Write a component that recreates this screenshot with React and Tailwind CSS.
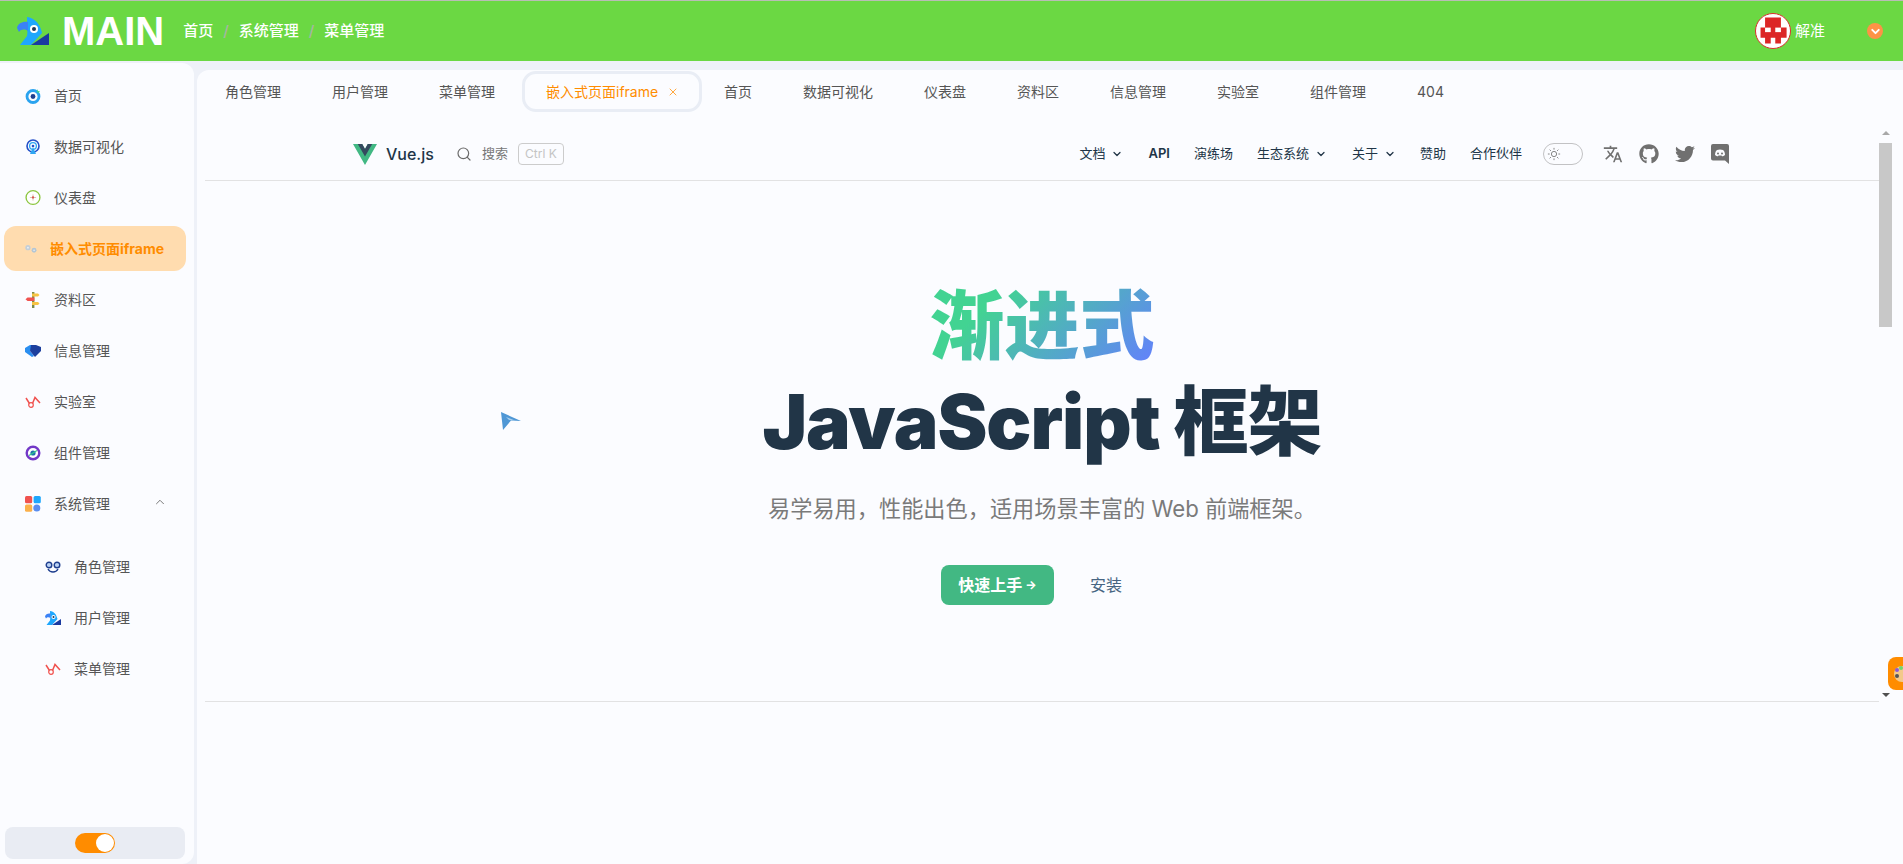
import { ChevronDown, ChevronUp, Search, X } from 'lucide-react';
import { FaGithub, FaTwitter } from 'react-icons/fa';

const uiFont = 'font-[Inter,"Noto_Sans_CJK_SC",sans-serif]';

// Small colourful menu icons
const BirdIcon = ({ className }) => (
  <svg viewBox="0 0 32 28" className={className}>
    <path d="M10 0C18 1 23 7 25 16L14 28H3L10 19C11 15 10 6 10 0Z" fill="#1ea7fd" />
    <path d="M0 11C1 6 6 4 11 5L11 14C8 12 4 12 2 15Z" fill="#3b82f6" />
    <path d="M32 16V28H14Z" fill="#1a3aa0" />
    <circle cx="17" cy="12" r="4" fill="#fff" />
    <circle cx="17" cy="12" r="2" fill="#1f3557" />
  </svg>
);

const TargetIcon = () => (
  <svg viewBox="0 0 16 16" className="w-4 h-4">
    <circle cx="8" cy="8.500" r="6" fill="none" stroke="#2aa3ef" strokeWidth="2.800" />
    <circle cx="8" cy="8.500" r="2.400" fill="#1f3f8f" />
    <path d="M12 1l1 2 2 .5-1.600 1.500-1.500-1z" fill="#3fd58a" />
  </svg>
);

const SignalIcon = () => (
  <svg viewBox="0 0 16 16" className="w-4 h-4">
    <circle cx="8" cy="7" r="6" fill="none" stroke="#2350c8" strokeWidth="1.600" />
    <circle cx="8" cy="7" r="3.400" fill="none" stroke="#2ea6f2" strokeWidth="1.300" />
    <circle cx="8" cy="7" r="1.300" fill="#2350c8" />
    <path d="M8 8l3 7H5z" fill="#2ea6f2" />
  </svg>
);

const CompassIcon = () => (
  <svg viewBox="0 0 18 18" className="w-[17px] h-[17px]">
    <circle cx="9" cy="9" r="7.800" fill="#fff" stroke="#8cc63f" strokeWidth="1.500" />
    <path d="M9 5.500v7M5.500 9h7" stroke="#c9a27a" strokeWidth="0.700" />
    <circle cx="9" cy="9" r="1.300" fill="#d9534f" />
  </svg>
);

const GearsIcon = () => (
  <svg viewBox="0 0 16 16" className="w-[14px] h-[14px]">
    <circle cx="4.500" cy="6.500" r="3" fill="#c3ced8" />
    <circle cx="11.500" cy="9.500" r="2.800" fill="#b4c6d4" />
    <circle cx="4.500" cy="6.500" r="1" fill="#eef2f6" />
    <circle cx="11.500" cy="9.500" r="0.900" fill="#eef2f6" />
  </svg>
);

const SignpostIcon = () => (
  <svg viewBox="0 0 16 16" className="w-4 h-4">
    <rect x="7" y="0" width="2.400" height="16" fill="#7c8b4a" />
    <path d="M7 1.500h6l1.500 1.500L13 4.500H7z" fill="#f6c343" />
    <path d="M9.400 5.500H2.500L0.500 7.200l2 1.800h6.900z" fill="#f0524f" />
    <path d="M7 10h6l1.500 1.500L13 13H7z" fill="#f6c343" />
  </svg>
);

const HandshakeIcon = () => (
  <svg viewBox="0 0 16 12" className="w-4 h-3">
    <path d="M0 3L5 0h4L5 6l4 5-2 1L0 7z" fill="#2a8ef0" />
    <path d="M6 0h5l5 2v4l-6 6-5-6z" fill="#1c3f9e" />
  </svg>
);

const LabIcon = () => (
  <svg viewBox="0 0 16 12" className="w-4 h-3">
    <path d="M1 2L4.500 7.500M7.500 7.500L10 1.500L15 7" fill="none" stroke="#f0524f" strokeWidth="1.500" />
    <circle cx="6" cy="9" r="2.300" fill="#fff" stroke="#f0524f" strokeWidth="1.200" />
  </svg>
);

const PlanetIcon = () => (
  <svg viewBox="0 0 16 16" className="w-4 h-4">
    <circle cx="8" cy="8" r="6.300" fill="#fff" stroke="#7238c7" strokeWidth="2.400" />
    <circle cx="8" cy="8" r="2.600" fill="#1f6fae" />
    <path d="M4 10.500L12 5.500" stroke="#35c98a" strokeWidth="1.200" />
  </svg>
);

const AppsIcon = () => (
  <svg viewBox="0 0 16 16" className="w-4 h-4">
    <rect x="0" y="0" width="7.200" height="7.200" rx="1.500" fill="#f0524f" />
    <rect x="8.600" y="0" width="7.200" height="7.200" rx="1.500" fill="#1ea7fd" />
    <rect x="0" y="8.600" width="7.200" height="7.200" rx="1.500" fill="#fbb04a" />
    <circle cx="11.800" cy="12" r="3.500" fill="#5a8df0" />
  </svg>
);

const GlassesIcon = () => (
  <svg viewBox="0 0 16 12" className="w-4 h-3">
    <circle cx="4" cy="4" r="2.800" fill="#bcd3f5" stroke="#1f3f8f" strokeWidth="1.400" />
    <circle cx="12" cy="4" r="2.800" fill="#bcd3f5" stroke="#1f3f8f" strokeWidth="1.400" />
    <path d="M3 8c2 4 8 4 10 0" fill="none" stroke="#1f3f8f" strokeWidth="1.400" />
  </svg>
);

const menuItems = [
  { label: '首页', icon: <TargetIcon /> },
  { label: '数据可视化', icon: <SignalIcon /> },
  { label: '仪表盘', icon: <CompassIcon /> },
  { label: '嵌入式页面iframe', icon: <GearsIcon />, active: true },
  { label: '资料区', icon: <SignpostIcon /> },
  { label: '信息管理', icon: <HandshakeIcon /> },
  { label: '实验室', icon: <LabIcon /> },
  { label: '组件管理', icon: <PlanetIcon /> },
  { label: '系统管理', icon: <AppsIcon />, open: true },
];

const subItems = [
  { label: '角色管理', icon: <GlassesIcon /> },
  { label: '用户管理', icon: <BirdIcon className="w-4 h-[14px]" /> },
  { label: '菜单管理', icon: <LabIcon /> },
];

const tabsBefore = ['角色管理', '用户管理', '菜单管理'];
const tabsAfter = ['首页', '数据可视化', '仪表盘', '资料区', '信息管理', '实验室', '组件管理', '404'];

function Header() {
  return (
    <header className="h-[61px] shrink-0 flex items-center bg-[#6bd843] border-t border-[#b9bdb5] text-white">
      <BirdIcon className="w-8 h-7 ml-[17px]" />
      <span className="ml-[13px] text-[40px] font-bold font-['Liberation_Sans',sans-serif] leading-none">MAIN</span>
      <nav className="ml-[19px] flex items-center gap-[10px] text-[15px] font-medium">
        <span>首页</span>
        <span className="text-[#a9b5a5]">/</span>
        <span>系统管理</span>
        <span className="text-[#a9b5a5]">/</span>
        <span>菜单管理</span>
      </nav>
      <div className="ml-auto flex items-center">
        <div className="w-9 h-9 rounded-full bg-white border border-[#d9302b] flex items-center justify-center overflow-hidden">
          <svg viewBox="0 0 30 30" className="w-[34px] h-[34px]">
            <path d="M8 3h14v9h5v9h-5v5H17v-5h-4v5H8v-5H4v-9h4z" fill="#dc2626" />
            <rect x="8" y="12" width="5" height="4" fill="#fff" />
            <rect x="17" y="12" width="5" height="4" fill="#fff" />
          </svg>
        </div>
        <span className="ml-1 text-[15px]">解准</span>
        <div className="ml-[42px] mr-5 w-4 h-4 rounded-full bg-[#fd9346] flex items-center justify-center">
          <ChevronDown size={13} strokeWidth={3.500} />
        </div>
      </div>
    </header>
  );
}

function MenuRow({ item, sub }) {
  if (item.active) {
    return (
      <div className="h-[45px] my-[3px] ml-1 mr-2 flex items-center rounded-xl bg-[#ffdcaf] pl-5 text-sm font-bold text-[#ff8c00]">
        <span className="w-[14px] flex justify-center">{item.icon}</span>
        <span className="ml-[12px]">{item.label}</span>
      </div>
    );
  }
  return (
    <div className={`h-[45px] my-[3px] flex items-center text-sm text-[#555] ${sub ? 'pl-[45px]' : 'pl-[25px]'}`}>
      <span className="w-4 flex justify-center">{item.icon}</span>
      <span className="ml-[13px] whitespace-nowrap">{item.label}</span>
      {item.open && <ChevronUp size={14} strokeWidth={1.500} className="ml-[43px] -mt-1 text-[#666]" />}
    </div>
  );
}

function Sidebar() {
  return (
    <aside className="w-[194px] shrink-0 mt-[2px] pt-[7px] flex flex-col rounded-tr-xl rounded-br-xl bg-[#fbfcff]">
      {menuItems.map((item) => (
        <MenuRow key={item.label} item={item} />
      ))}
      <div className="mt-3 flex flex-col">
        {subItems.map((item) => (
          <MenuRow key={item.label} item={item} sub />
        ))}
      </div>
      <div className="mt-auto mb-[5px] ml-[5px] mr-[9px] h-8 rounded-lg bg-[#e9ecf3] flex items-center justify-center">
        <div className="w-10 h-5 rounded-full bg-[#ff8c00] flex items-center justify-end pr-[1px]">
          <div className="w-[18px] h-[18px] rounded-full bg-white" />
        </div>
      </div>
    </aside>
  );
}

function TabBar() {
  return (
    <div className="h-[43px] mb-[12px] shrink-0 pl-7 flex items-center text-sm text-[#555]">
      <div className="flex items-center gap-[51px]">
        {tabsBefore.map((t) => (
          <span key={t}>{t}</span>
        ))}
      </div>
      <div className="ml-[27px] w-[180px] h-[41px] rounded-[14px] border-[3px] border-[#e9edf5] flex items-center pl-[21px] text-[#ff8c00]">
        <span>嵌入式页面iframe</span>
        <X size={12} strokeWidth={1.500} className="ml-[9px] mt-[1px]" />
      </div>
      <div className="ml-[22px] flex items-center gap-[51px]">
        {tabsAfter.map((t) => (
          <span key={t}>{t}</span>
        ))}
      </div>
    </div>
  );
}

const navText = 'text-[13px] font-normal text-[#213547]';

function VueNav() {
  return (
    <div className="h-[56px] shrink-0 pt-[3px] border-b border-[#e2e2e3] pl-[148px] pr-[150px] flex items-center">
      <svg viewBox="0 0 261.760 226.690" className="w-6 h-[21px]">
        <path d="M161.096.001l-30.225 52.351L100.647.001H-.005l130.877 226.688L261.749.001z" fill="#41b883" />
        <path d="M161.096.001l-30.225 52.351L100.647.001H52.346l78.526 136.010L209.398.001z" fill="#34495e" />
      </svg>
      <span className="ml-[9px] text-base font-medium text-[#213547]">Vue.js</span>
      <Search size={16} strokeWidth={1.800} className="ml-[22px] text-[#6b6b6b]" />
      <span className="ml-[10px] text-[13px] text-[#777]">搜索</span>
      <span className="ml-[10px] w-[46px] h-[22px] rounded border border-[#ccc] flex items-center justify-center text-xs text-[#c4c4c4]">Ctrl K</span>
      <div className="ml-auto flex items-center">
        <span className={`${navText} flex items-center gap-[6px]`}>文档<ChevronDown size={12} strokeWidth={2.500} /></span>
        <span className={`${navText} ml-[25px] font-semibold`}>API</span>
        <span className={`${navText} ml-6`}>演练场</span>
        <span className={`${navText} ml-6 flex items-center gap-[6px]`}>生态系统<ChevronDown size={12} strokeWidth={2.500} /></span>
        <span className={`${navText} ml-[25px] flex items-center gap-[6px]`}>关于<ChevronDown size={12} strokeWidth={2.500} /></span>
        <span className={`${navText} ml-6`}>赞助</span>
        <span className={`${navText} ml-6`}>合作伙伴</span>
      </div>
      <div className="ml-[21px] w-10 h-[22px] rounded-full border border-[#c2c2c4] flex items-center pl-[3px] text-[#777]">
        <svg viewBox="0 0 16 16" className="w-[14px] h-[14px]" fill="none" stroke="currentColor" strokeWidth="1">
          <circle cx="8" cy="8" r="3" />
          <path d="M8 1v2M8 13v2M1 8h2M13 8h2M3 3l1.500 1.500M11.500 11.500L13 13M3 13l1.500-1.500M11.500 4.500L13 3" />
        </svg>
      </div>
      <div className="ml-5 flex items-center gap-[16px] text-[#707070]">
        <svg viewBox="0 0 24 24" className="w-[20px] h-[20px]" fill="currentColor">
          <path d="M12.870 15.070l-2.540-2.510.030-.030A17.520 17.520 0 0014.070 6H17V4h-7V2H8v2H1v2h11.170C11.500 7.920 10.440 9.750 9 11.350 8.070 10.320 7.300 9.190 6.690 8h-2c.730 1.630 1.730 3.170 2.980 4.560l-5.090 5.020L4 19l5-5 3.110 3.110.760-2.040zM18.500 10h-2L12 22h2l1.120-3h4.750L21 22h2l-4.500-12zm-2.620 7l1.620-4.330L19.120 17h-3.240z" />
        </svg>
        <FaGithub size={20} />
        <FaTwitter size={20} />
        {/* old discord mark: rounded square with a tail */}
        <svg viewBox="0 0 18 20" className="w-[18px] h-5">
          <path d="M2 0h14a2 2 0 012 2v18l-4-3.500H2a2 2 0 01-2-2V2a2 2 0 012-2z" fill="currentColor" />
          <path d="M4 11c0-2.500 1-4.500 2-5 1.500-.7 4.500-.7 6 0 1 .5 2 2.500 2 5-1 1-2 1.300-3 1.300l-.5-.8h-3l-.5.8c-1 0-2-.3-3-1.300z" fill="#fbfcff" />
          <circle cx="7" cy="9.500" r="1" fill="currentColor" />
          <circle cx="11" cy="9.500" r="1" fill="currentColor" />
        </svg>
      </div>
    </div>
  );
}

function Hero() {
  return (
    <div className="h-[521px] shrink-0 border-b border-[#e2e2e3] flex flex-col items-center pt-[103px]">
      <div className="w-fit text-[75px] font-black leading-[84px] text-transparent bg-clip-text bg-[linear-gradient(135deg,#42d392_25%,#647eff)]">渐进式</div>
      <div className="mt-[12px] text-[75px] font-black leading-[84px] tracking-[-1px] text-[#213547]">JavaScript 框架</div>
      <p className="mt-[27px] text-[22.200px] leading-[36px] text-[#7a7a7a]">易学易用，性能出色，适用场景丰富的 Web 前端框架。</p>
      <div className="mt-[38px] flex items-center">
        <span className="w-[113px] h-10 rounded-lg bg-[#42b883] flex items-center justify-center gap-[3px] text-base font-semibold text-white">
          快速上手<span className="text-xs font-bold">→</span>
        </span>
        <span className="ml-9 mr-[21px] text-base font-normal text-[#476582]">安装</span>
      </div>
    </div>
  );
}

function Scrollbar() {
  return (
    <div className="w-[13px] shrink-0 flex flex-col items-center">
      <div className="mt-[6px] w-0 h-0 border-x-[4px] border-x-transparent border-b-[4px] border-b-[#a8a8a8]" />
      <div className="mt-2 w-[13px] h-[184px] bg-[#c8c8c8]" />
      <div className="mt-[366px] w-0 h-0 border-x-[4px] border-x-transparent border-t-[4px] border-t-[#505050]" />
    </div>
  );
}

export default function App() {
  return (
    <div className={`h-screen w-full overflow-hidden flex flex-col bg-[#eef1f8] ${uiFont}`}>
      <Header />
      <div className="flex-1 min-h-0 flex">
        <Sidebar />
        <main className="relative flex-1 min-w-0 ml-[3px] mt-[9px] flex flex-col rounded-tl-xl bg-[#fbfcff]">
          <TabBar />
          <div className="flex-1 min-h-0 flex ml-2 mr-[11px]">
            <div className="flex-1 min-w-0">
              <VueNav />
              <Hero />
            </div>
            <Scrollbar />
          </div>

          {/* floating paper plane over the page */}
          <svg viewBox="0 0 21 18" className="absolute left-[303px] top-[342px] w-[21px] h-[18px]">
            <path d="M1 0L21 9L11 8.500L3 18Z" fill="#4f97d5" />
            <path d="M6 5L15 8.500L9 8Z" fill="#a9d0ee" />
          </svg>

          {/* theme widget stuck to the right edge */}
          <div className="absolute right-0 top-[587px] w-[15px] h-[33px] rounded-l-lg bg-[#ff8c00] overflow-hidden">
            <div className="ml-[6px] mt-[9px] w-5 h-4 rounded-full bg-[#f3c98b] relative">
              <div className="absolute left-[1px] top-[2px] w-[4px] h-[4px] rounded-full bg-[#8a5ad6]" />
              <div className="absolute left-[1px] top-[8px] w-[4px] h-[4px] rounded-full bg-[#555]" />
              <div className="absolute left-[5px] top-0 w-[4px] h-[4px] rounded-full bg-[#6fd86f]" />
            </div>
          </div>
        </main>
      </div>
    </div>
  );
}
